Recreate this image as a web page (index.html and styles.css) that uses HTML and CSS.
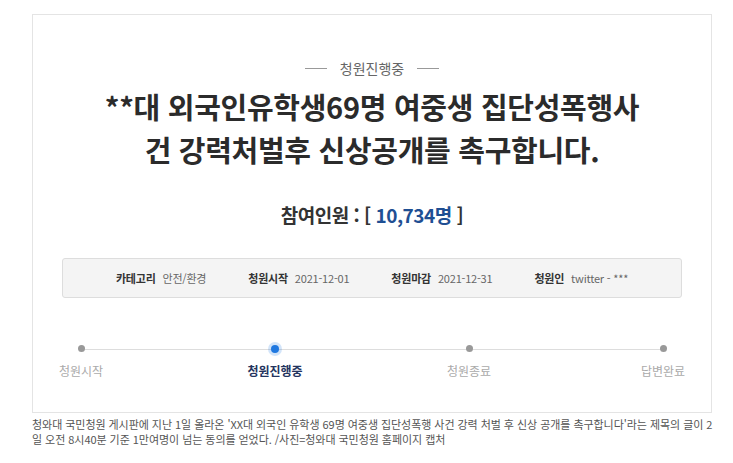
FILE: index.html
```html
<!DOCTYPE html>
<html lang="ko">
<head>
    <meta charset="utf-8">
    <title>청원진행중</title>
    <link rel="stylesheet" href="styles.css">
</head>
<body>
    <div class="photo">
        <div class="petition">
            <div class="state">
                <span class="rule"></span>
                <span>청원진행중</span>
                <span class="rule"></span>
            </div>
            <h1 class="title">**대 외국인유학생69명 여중생 집단성폭행사<br>건 강력처벌후 신상공개를 촉구합니다.</h1>
            <p class="count">참여인원 : [ <span class="num">10,734명</span> ]</p>

            <ul class="info">
                <li><b>카테고리</b> 안전/환경</li>
                <li><b>청원시작</b> 2021-12-01</li>
                <li><b>청원마감</b> 2021-12-31</li>
                <li><b>청원인</b> twitter - ***</li>
            </ul>

            <div class="steps">
                <div class="step">
                    <span class="dot"></span>
                    <span class="label">청원시작</span>
                </div>
                <div class="step active">
                    <span class="dot"></span>
                    <span class="label">청원진행중</span>
                </div>
                <div class="step">
                    <span class="dot"></span>
                    <span class="label">청원종료</span>
                </div>
                <div class="step">
                    <span class="dot"></span>
                    <span class="label">답변완료</span>
                </div>
            </div>
        </div>
        <p class="caption">청와대 국민청원 게시판에 지난 1일 올라온 'XX대 외국인 유학생 69명 여중생 집단성폭행 사건 강력 처벌 후 신상 공개를 촉구합니다'라는 제목의 글이 2<br>일 오전 8시40분 기준 1만여명이 넘는 동의를 얻었다. /사진=청와대 국민청원 홈페이지 캡처</p>
    </div>
</body>
</html>
```

FILE: styles.css
```css
body {
    margin: 0;
    background-color: #fff;
    font-family: "Noto Sans CJK KR", "Noto Sans", sans-serif;
    color: #333;
}
.photo {
    padding: 14px 0 0 32px;
}
.petition {
    width: 678px;
    border: 1px solid #e4e4e4;
    padding: 43px 0 32px;
    text-align: center;
}
.state {
    display: flex;
    justify-content: center;
    align-items: center;
    gap: 13px;
    font-size: 14px;
    line-height: 20px;
    color: #666;
}
.rule {
    width: 22px;
    height: 1px;
    background-color: #999;
}
.title {
    margin: 7px 0 0;
    font-size: 29px;
    line-height: 43px;
    font-weight: bold;
    letter-spacing: -0.3px;
    color: #2b2b2b;
}
.count {
    margin: 30px 0 0;
    font-size: 19px;
    line-height: 28px;
    font-weight: bold;
    letter-spacing: -0.5px;
}
.num {
    color: #1f4f93;
}
.info {
    list-style: none;
    margin: 29px 29px 0;
    padding: 0;
    height: 38px;
    border: 1px solid #ddd;
    border-radius: 3px;
    background-color: #f4f4f4;
    display: flex;
    justify-content: center;
    align-items: center;
    gap: 42px;
    font-size: 11px;
    letter-spacing: -0.2px;
    color: #666;
}
.info b {
    color: #333;
    margin-right: 4px;
}
.steps {
    margin: 45px 18px 0;
    display: flex;
    justify-content: space-between;
    background: linear-gradient(#ddd, #ddd) no-repeat 30px 6px / calc(100% - 60px) 1px;
}
.step {
    width: 60px;
    display: flex;
    flex-direction: column;
    align-items: center;
    gap: 7px;
}
.dot {
    width: 7px;
    height: 7px;
    margin: 2px 0 3px;
    border-radius: 50%;
    background-color: #999;
}
.step.active .dot {
    width: 8px;
    height: 8px;
    margin: 2px 0 2px;
    background-color: #1f78e0;
    box-shadow: 0 0 0 3px rgba(31, 120, 224, 0.2);
}
.label {
    font-size: 12px;
    line-height: 18px;
    color: #aaa;
    white-space: nowrap;
}
.step.active .label {
    font-weight: bold;
    color: #24345e;
}
.caption {
    margin: 4px 0 0;
    font-size: 11px;
    line-height: 15px;
    color: #555;
    white-space: nowrap;
    letter-spacing: -0.05px;
}
```
